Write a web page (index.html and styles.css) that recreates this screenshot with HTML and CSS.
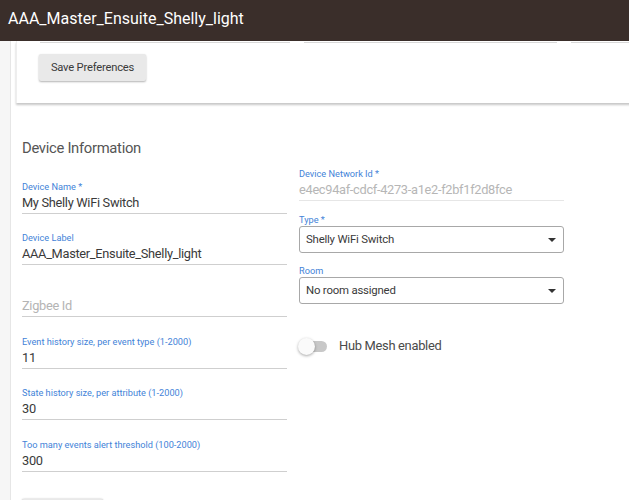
FILE: index.html
```html
<!DOCTYPE html>
<html lang="en">
<head>
<meta charset="utf-8">
<title>AAA_Master_Ensuite_Shelly_light</title>
<link rel="stylesheet" href="styles.css">
</head>
<body>
<header class="topbar"><h1 class="title">AAA_Master_Ensuite_Shelly_light</h1></header>
<div class="page">
  <aside class="rail"></aside>
  <main class="content">
    <section class="card prefs">
      <div class="pref-lines"><span class="seg seg-a"></span><span class="seg seg-b"></span><span class="seg seg-c"></span></div>
      <button class="btn">Save Preferences</button>
    </section>
    <section class="device">
      <h2 class="heading">Device Information</h2>
      <div class="grid">
        <div class="col col-left">
          <div class="field"><label class="lbl">Device Name *</label><div class="val">My Shelly WiFi Switch</div></div>
          <div class="field"><label class="lbl">Device Label</label><div class="val">AAA_Master_Ensuite_Shelly_light</div></div>
          <div class="field"><label class="lbl">&nbsp;</label><div class="val placeholder">Zigbee Id</div></div>
          <div class="field"><label class="lbl">Event history size, per event type (1-2000)</label><div class="val">11</div></div>
          <div class="field"><label class="lbl">State history size, per attribute (1-2000)</label><div class="val">30</div></div>
          <div class="field"><label class="lbl">Too many events alert threshold (100-2000)</label><div class="val">300</div></div>
          <div class="btn-bottom"></div>
        </div>
        <div class="col col-right">
          <div class="field field-disabled"><label class="lbl">Device Network Id *</label><div class="val muted">e4ec94af-cdcf-4273-a1e2-f2bf1f2d8fce</div></div>
          <div class="sel-field"><label class="lbl">Type *</label><div class="select"><span>Shelly WiFi Switch</span><span class="caret"></span></div></div>
          <div class="sel-field"><label class="lbl">Room</label><div class="select"><span>No room assigned</span><span class="caret"></span></div></div>
          <div class="switch-row"><span class="switch"><span class="track"></span><span class="knob"></span></span><span class="switch-label">Hub Mesh enabled</span></div>
        </div>
      </div>
    </section>
  </main>
</div>
</body>
</html>
```
FILE: styles.css
```css
* { box-sizing: border-box; }
html, body { margin: 0; padding: 0; }
body {
  width: 629px;
  height: 500px;
  overflow: hidden;
  font-family: Roboto, "Liberation Sans", Arial, sans-serif;
  color: #333;
  background: #fff;
}
.topbar {
  height: 41px;
  background: #3a2e2a;
  padding: 9px 0 0 8px;
}
.title {
  margin: 0;
  font-size: 16px;
  font-weight: 400;
  color: #fff;
  line-height: 20px;
}
.page {
  display: flex;
  height: 459px;
}
.rail {
  width: 11px;
  flex: none;
  background: #f6f6f6;
  border-right: 1px solid #e6e6e6;
}
.content {
  flex: 1;
  min-width: 0;
}
.card {
  background: #fff;
  margin-left: 5px;
  margin-right: -20px;
  border-left: 1px solid #eee;
  box-shadow: 0 2px 2px rgba(0,0,0,0.22);
}
.prefs {
  padding: 1px 0 22px 22px;
}
.pref-lines {
  display: flex;
  height: 1px;
  margin-left: 1px;
}
.seg { height: 1px; background: #d8d8d8; flex: none; }
.seg-a { width: 250px; }
.seg-b { width: 253px; margin-left: 14px; }
.seg-c { width: 80px; margin-left: 14px; }
.btn {
  display: block;
  margin-top: 11px;
  height: 27px;
  width: 107px;
  padding: 0;
  border: none;
  border-radius: 2px;
  background: #e9e9e9;
  color: #3a3a3a;
  font-family: inherit;
  font-size: 11.2px;
  letter-spacing: -0.2px;
  box-shadow: 0 1px 2px rgba(0,0,0,0.3);
}
.device {
  padding: 35px 0 0 11px;
}
.heading {
  margin: 0;
  font-size: 14.8px;
  letter-spacing: -0.3px;
  font-weight: 400;
  line-height: 20px;
  color: #555;
}
.grid {
  display: grid;
  grid-template-columns: 265px 265px;
  column-gap: 12px;
  margin-top: 10px;
}
.col-left { padding-top: 12.8px; }
.field {
  border-bottom: 1px solid #cfcfcf;
  margin-bottom: 18.6px;
}
.lbl {
  display: block;
  font-size: 9.2px;
  line-height: 12px;
  color: #4383d8;
  white-space: nowrap;
}
.val {
  font-size: 12.8px;
  letter-spacing: -0.3px;
  line-height: 20px;
  color: #3a3a3a;
  white-space: nowrap;
}
.placeholder { color: #b4b4b4; }
.muted { color: #b6b6b6; }
.field-disabled { border-bottom-color: #e6e6e6; margin-bottom: 12.8px; }
.sel-field { margin-bottom: 12px; }
.select {
  height: 27px;
  border: 1px solid #a8a8a8;
  border-radius: 3px;
  display: flex;
  align-items: center;
  justify-content: space-between;
  padding: 0 7px 0 6px;
  font-size: 11.4px;
  letter-spacing: -0.2px;
  color: #3a3a3a;
}
.caret {
  width: 0;
  height: 0;
  border-left: 4.5px solid transparent;
  border-right: 4.5px solid transparent;
  border-top: 4.5px solid #333;
  margin-top: 1px;
}
.sel-field + .switch-row { margin-top: 34px; }
.switch-row {
  display: flex;
  align-items: center;
  gap: 11px;
}
.switch {
  position: relative;
  width: 29px;
  height: 18px;
  flex: none;
}
.track {
  position: absolute;
  left: 1px;
  top: 3.5px;
  width: 27px;
  height: 11px;
  border-radius: 6px;
  background: #c8c8c8;
}
.knob {
  position: absolute;
  left: -1px;
  top: 0;
  width: 17px;
  height: 17px;
  border-radius: 50%;
  background: #fafafa;
  box-shadow: 0 1px 3px rgba(0,0,0,0.35);
}
.switch-label {
  font-size: 12.9px;
  letter-spacing: -0.3px;
  line-height: 18px;
  color: #4a4a4a;
  margin-top: -2px;
}
.btn-bottom {
  margin-top: 27px;
  width: 81px;
  height: 20px;
  border-radius: 2px;
  background: #e9e9e9;
  box-shadow: 0 0 2px rgba(0,0,0,0.3);
}
```
